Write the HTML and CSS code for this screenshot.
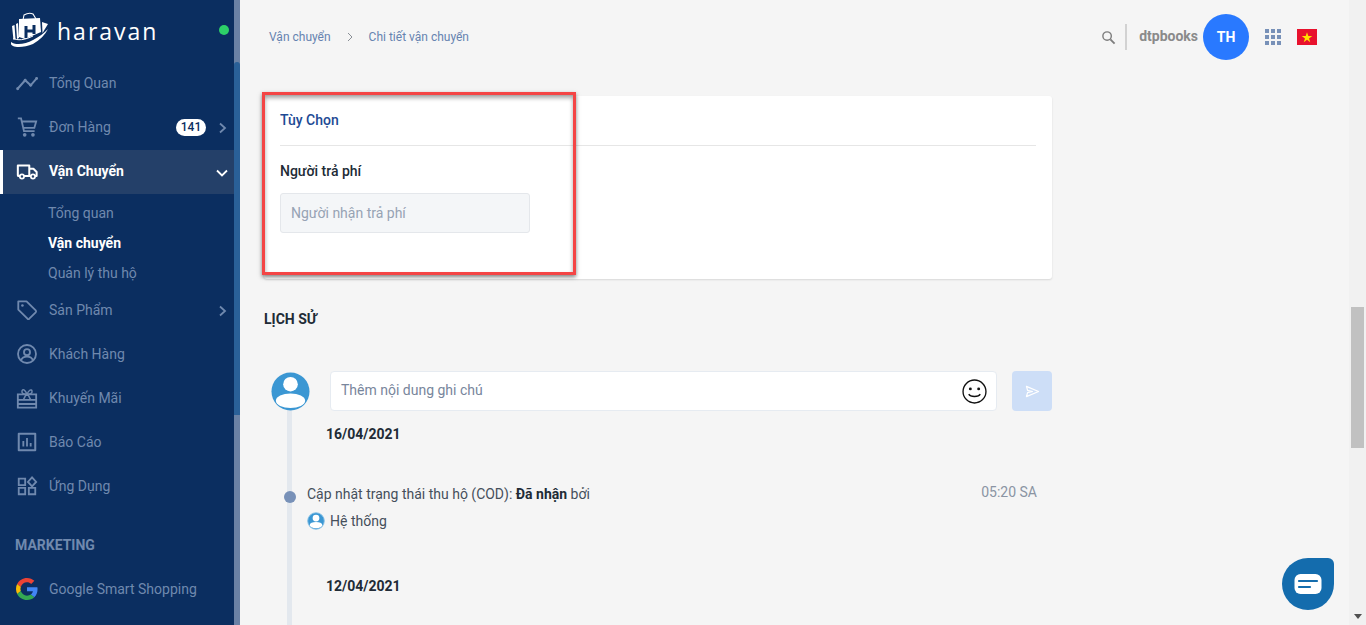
FILE: index.html
```html
<!DOCTYPE html>
<html lang="vi">
<head>
<meta charset="utf-8">
<title>Haravan - Chi tiết vận chuyển</title>
<link rel="stylesheet" href="styles.css">
</head>
<body>
<div class="app">
  <aside class="sidebar">
    <div class="side-main">
      <div class="brand">
        <svg class="brand-mark" viewBox="0 0 37 36" width="37" height="36" aria-hidden="true">
          <path d="M12 8l1-5q5-3 9-1l3 5" fill="none" stroke="#fff" stroke-width="1.100"/>
          <path d="M8 7l21-1 1 14-16 7-6-2z" fill="#fff"/>
          <path d="M1 14l2.500-1 1 14-2 1zM5 12l2-1 1 15-2 1z" fill="#fff"/>
          <path d="M31 10l6 2-5.500 9z" fill="#fff"/>
          <path d="M15 14v12M23 13v9M15 19h8" stroke="#0b2e60" stroke-width="3" fill="none"/>
          <path d="M0 30c3 3 14 3 22-2 6-3 11-7 15-11-3 6-8 11-15 15-7 3-16 4-20 2-2-1-3-3-2-4z" fill="#fff"/>
          <path d="M2 26c4 3 12 2 20-2" fill="none" stroke="#fff" stroke-width="1"/>
        </svg>
        <span class="brand-name">haravan</span>
        <span class="status-dot"></span>
      </div>
      <nav class="nav">
        <a class="nav-item"><svg class="ico" viewBox="0 0 24 24"><path d="M1.500 18.500l8.500-9.500 6 5.500 7-8" fill="none" stroke="currentColor" stroke-width="2.200"/><circle cx="1.800" cy="18.300" r="1.600" fill="currentColor"/><circle cx="10" cy="9" r="1.600" fill="currentColor"/><circle cx="16" cy="14.500" r="1.600" fill="currentColor"/><circle cx="22.500" cy="7" r="1.600" fill="currentColor"/></svg><span>Tổng Quan</span></a>
        <a class="nav-item"><svg class="ico" viewBox="0 0 24 24"><path d="M2 2.500h3.500l3.200 14h11.600M6 6h16l-2 7H7.800" fill="none" stroke="currentColor" stroke-width="2"/><circle cx="9.500" cy="20.500" r="2" fill="currentColor"/><circle cx="18.500" cy="20.500" r="2" fill="currentColor"/></svg><span>Đơn Hàng</span><b class="badge">141</b><svg class="chev" viewBox="0 0 12 12"><path d="M4 1.500l5 4.500-5 4.500" fill="none" stroke="currentColor" stroke-width="1.800"/></svg></a>
        <a class="nav-item active"><svg class="ico" viewBox="0 0 24 24"><path d="M2 6h12.500v11.500H3a1 1 0 01-1-1zM14.500 9.500h4.500l3.500 3.500v4.500h-8z" fill="none" stroke="currentColor" stroke-width="2.200" stroke-linejoin="round"/><circle cx="6.500" cy="18" r="2.300" fill="#244069" stroke="currentColor" stroke-width="1.900"/><circle cx="18.500" cy="18" r="2.300" fill="#244069" stroke="currentColor" stroke-width="1.900"/></svg><span>Vận Chuyển</span><svg class="chev" viewBox="0 0 12 12"><path d="M1 3.500l5 5 5-5" fill="none" stroke="currentColor" stroke-width="1.800"/></svg></a>
        <div class="sub">
          <a class="sub-item">Tổng quan</a>
          <a class="sub-item current">Vận chuyển</a>
          <a class="sub-item">Quản lý thu hộ</a>
        </div>
        <a class="nav-item"><svg class="ico" viewBox="0 0 24 24"><path d="M2.500 2.500h9l10 10a1.500 1.500 0 010 2l-7 7a1.500 1.500 0 01-2 0l-10-10z" fill="none" stroke="currentColor" stroke-width="2" stroke-linejoin="round"/><circle cx="7" cy="7" r="1.400" fill="currentColor"/></svg><span>Sản Phẩm</span><svg class="chev" viewBox="0 0 12 12"><path d="M4 1.500l5 4.500-5 4.500" fill="none" stroke="currentColor" stroke-width="1.800"/></svg></a>
        <a class="nav-item"><svg class="ico" viewBox="0 0 24 24"><circle cx="12" cy="12" r="9.800" fill="none" stroke="currentColor" stroke-width="2"/><circle cx="12" cy="10" r="3.300" fill="none" stroke="currentColor" stroke-width="2"/><path d="M5.500 19c1-3 3.500-4.200 6.500-4.200s5.500 1.200 6.500 4.200" fill="none" stroke="currentColor" stroke-width="2"/></svg><span>Khách Hàng</span></a>
        <a class="nav-item"><svg class="ico" viewBox="0 0 24 24"><path d="M2 8h20v14.500H2zM2 14h20M2 18.500h20" fill="none" stroke="currentColor" stroke-width="2"/><path d="M12 8C10 3 7 1.500 6.500 4.500S9 8 12 8c3 0 6-1 5.500-3.500S14 3 12 8zM8 14l3-6M16 14l-3-6" fill="none" stroke="currentColor" stroke-width="1.600"/></svg><span>Khuyến Mãi</span></a>
        <a class="nav-item"><svg class="ico" viewBox="0 0 24 24"><path d="M3 3h18v18H3z" fill="none" stroke="currentColor" stroke-width="2.200" stroke-linejoin="round"/><path d="M8 11v6M12 7.500V17M16 13v4" stroke="currentColor" stroke-width="2"/></svg><span>Báo Cáo</span></a>
        <a class="nav-item"><svg class="ico" viewBox="0 0 24 24"><path d="M3 4h7v7H3zM3 14h7v7H3zM14 14h7v7h-7z" fill="none" stroke="currentColor" stroke-width="2"/><path d="M17.500 2.500l4.500 5-4.500 5-4.500-5z" fill="none" stroke="currentColor" stroke-width="2"/></svg><span>Ứng Dụng</span></a>
        <div class="nav-label">MARKETING</div>
        <a class="nav-item"><svg class="ico" viewBox="0 0 48 48"><path fill="#EA4335" d="M24 9.500c3.500 0 6.700 1.200 9.200 3.600l6.900-6.900C35.900 2.400 30.500 0 24 0 14.600 0 6.500 5.400 2.600 13.200l8 6.200C12.400 13.700 17.700 9.500 24 9.500z"/><path fill="#4285F4" d="M47 24.500c0-1.600-.1-3.100-.4-4.500H24v9h12.900c-.6 3-2.200 5.500-4.800 7.200l7.700 6C44.400 38 47 31.800 47 24.500z"/><path fill="#FBBC05" d="M10.500 28.600c-.5-1.400-.8-3-.8-4.600s.3-3.200.8-4.600l-8-6.200C.9 16.500 0 20.100 0 24s.9 7.500 2.600 10.800z"/><path fill="#34A853" d="M24 48c6.500 0 11.900-2.100 15.900-5.800l-7.700-6c-2.200 1.500-4.900 2.300-8.200 2.300-6.300 0-11.600-4.200-13.500-9.900l-8 6.200C6.500 42.600 14.600 48 24 48z"/></svg><span>Google Smart Shopping</span></a>
      </nav>
    </div>
    <div class="side-track"><div class="side-thumb"></div></div>
  </aside>

  <main class="content">
    <header class="topbar">
      <div class="crumbs"><a>Vận chuyển</a><svg class="crumb-sep" viewBox="0 0 8 10"><path d="M2 1l4 4-4 4" fill="none" stroke="currentColor" stroke-width="1"/></svg><a>Chi tiết vận chuyển</a></div>
      <div class="tools">
        <svg class="search" viewBox="0 0 16 16"><circle cx="6.500" cy="6.500" r="4.500" fill="none" stroke="currentColor" stroke-width="1.500"/><path d="M10 10l4.500 4.500" stroke="currentColor" stroke-width="2"/></svg>
        <span class="vr"></span>
        <span class="user">dtpbooks</span>
        <span class="avatar">TH</span>
        <span class="apps"><i></i><i></i><i></i><i></i><i></i><i></i><i></i><i></i><i></i></span>
        <svg class="flag" viewBox="0 0 20 16"><rect width="20" height="16" fill="#e8112d"/><path d="M10 3.200l1.300 3.800h4l-3.300 2.400 1.300 3.800-3.300-2.400-3.300 2.400 1.300-3.800L4.700 7h4z" fill="#ffe000"/></svg>
      </div>
    </header>

    <div class="column">
      <section class="card">
        <h2 class="card-title">Tùy Chọn</h2>
        <label class="field-label">Người trả phí</label>
        <div class="readonly">Người nhận trả phí</div>
        <div class="highlight"></div>
      </section>

      <h3 class="history-title">LỊCH SỬ</h3>

      <div class="timeline">
        <div class="note-row">
          <svg class="note-avatar" viewBox="0 0 40 40"><circle cx="20" cy="20" r="19.500" fill="#3b97d3"/><g fill="#fff"><circle cx="20" cy="12.500" r="7.500"/><ellipse cx="20" cy="29.500" rx="15" ry="7.500"/></g></svg>
          <div class="note-input"><span class="note-ph">Thêm nội dung ghi chú</span>
            <svg class="smile" viewBox="0 0 24 24"><circle cx="12" cy="12" r="11" fill="none" stroke="#111" stroke-width="1.300"/><circle cx="8" cy="9.500" r="1.400" fill="#111"/><circle cx="16" cy="9.500" r="1.400" fill="#111"/><path d="M6.500 14.500c1.500 3 9.500 3 11 0" fill="none" stroke="#111" stroke-width="1.300"/></svg>
          </div>
          <button class="send"><svg viewBox="0 0 16 14" width="15" height="13"><path d="M1.500 1.500L14.500 7 1.500 12.500l1.200-4.200L8 7 2.700 5.700z" fill="none" stroke="#fff" stroke-width="1.300" stroke-linejoin="round"/></svg></button>
        </div>
        <div class="date first">16/04/2021</div>
        <div class="event">
          <span class="dot"></span>
          <div class="event-body">
            <p class="event-text">Cập nhật trạng thái thu hộ (COD): <b>Đã nhận</b> bởi</p>
            <p class="event-by"><svg class="mini" viewBox="0 0 40 40"><circle cx="20" cy="20" r="18.500" fill="#3b97d3" stroke="#8cc4e8" stroke-width="2"/><g fill="#fff"><circle cx="20" cy="13.500" r="7.500"/><ellipse cx="20" cy="29" rx="14" ry="7"/></g></svg>Hệ thống</p>
          </div>
          <span class="time">05:20 SA</span>
        </div>
        <div class="date">12/04/2021</div>
      </div>
    </div>

    <button class="chat"><svg viewBox="0 0 28 22" width="28" height="22"><rect width="27" height="20" x=".5" y="1" rx="6" fill="#fff"/><path d="M5 8h18M5 14h11" stroke="#146cad" stroke-width="2.200" stroke-linecap="round"/></svg></button>
  </main>

  <div class="page-scroll"><div class="page-thumb"></div><span class="page-arrow"></span></div>
</div>
</body>
</html>
```
FILE: styles.css
```css
* { box-sizing: border-box; }
html, body { margin: 0; height: 100%; overflow: hidden; }
body { font-family: Roboto, "Liberation Sans", sans-serif; font-size: 14px; color: #212b36; background: #f5f5f5; }
a { color: inherit; text-decoration: none; }
.app { display: flex; height: 625px; }

.sidebar { width: 240px; flex: none; display: flex; background: #0b2e60; color: #7089ae; }
.side-main { flex: 1; min-width: 0; }
.side-track { width: 6px; padding-top: 62px; background: #6a81a5; }
.side-thumb { height: 353px; background: #2a6098; border-radius: 3px 3px 0 0; }

.brand { height: 61px; display: flex; align-items: center; padding: 0 0 0 11px; position: relative; }
.brand-mark { flex: none; margin-top: -1px; }
.brand-name { font-family: "Open Sans", sans-serif; font-size: 23px; font-weight: 400; letter-spacing: 2px; color: #fff; margin: 1px 0 0 9px; }
.status-dot { position: absolute; left: 219px; top: 25px; width: 10px; height: 10px; border-radius: 50%; background: #2dd068; }

.nav-item { height: 44px; display: flex; align-items: center; padding-left: 16px; font-size: 14px; position: relative; }
.nav-item span { margin-left: 11px; }
.ico { width: 22px; height: 22px; flex: none; }
.chev { width: 12px; height: 12px; position: absolute; left: 216px; top: 17px; }
.badge { position: absolute; left: 176px; top: 14px; width: 30px; height: 17px; border-radius: 9px; background: #fff; color: #0b2e60; font-size: 12px; font-weight: 500; line-height: 17px; text-align: center; }
.active { background: #244069; color: #fff; font-weight: 700; margin-top: 1px; border-left: 3px solid #fff; padding: 0 0 2px 13px; }
.active .chev { left: 213px; }
.sub { padding: 4px 0 0; height: 94px; }
.sub-item { display: block; height: 30px; line-height: 30px; padding-left: 48px; font-size: 14px; }
.current { color: #fff; font-weight: 700; }
.nav-label { height: 59px; margin-top: 7px; padding: 21px 0 0 15px; font-size: 14px; line-height: 18px; font-weight: 700; color: #7089ae; }
.nav-label + .nav-item { margin-top: -7px; }

.content { flex: 1; min-width: 0; position: relative; overflow: hidden; }
.topbar { height: 72px; display: flex; align-items: center; justify-content: space-between; padding: 0 32px 0 29px; }
.crumbs { display: flex; align-items: center; font-size: 12px; color: #6683b0; margin-top: 1px; }
.crumb-sep { width: 8px; height: 10px; margin: 0 15px 0 15px; color: #8a8f96; }
.tools { display: flex; align-items: center; margin-top: 2px; }
.search { width: 15px; height: 15px; color: #7d7d7d; }
.vr { width: 2px; height: 26px; background: #d2d2d2; margin: 0 12px 0 9px; }
.user { font-weight: 700; font-size: 14px; color: #8a8a8a; margin-top: -2px; }
.avatar { width: 46px; height: 46px; border-radius: 50%; background: #2979ff; color: #fff; font-weight: 700; font-size: 14px; display: flex; align-items: center; justify-content: center; margin-left: 5px; }
.apps { display: grid; grid-template-columns: repeat(3, 4px); grid-auto-rows: 4px; gap: 2px; margin-left: 16px; }
.apps i { background: #7891b8; display: block; }
.flag { width: 20px; height: 16px; margin-left: 16px; }

.column { width: 788px; margin: 24px 0 0 24px; }
.card { height: 183px; background: #fff; border-radius: 3px; padding: 0 16px; position: relative; box-shadow: 0 1px 2px rgba(0,0,0,.12); }
.card-title { margin: 0; height: 50px; line-height: 48px; font-size: 14px; font-weight: 500; color: #1d4a94; border-bottom: 1px solid #e6e6e6; }
.field-label { display: block; margin-top: 15px; font-size: 14px; font-weight: 500; line-height: 20px; color: #212b36; }
.readonly { width: 250px; height: 40px; margin-top: 12px; background: #f4f6f8; border: 1px solid #e4e7eb; border-radius: 3px; padding: 0 10px; line-height: 38px; color: #97a3b4; }
.highlight { position: absolute; left: -2px; top: -4px; width: 314px; height: 183px; border: 3px solid #f44545; box-shadow: 0 2px 4px rgba(0,0,0,.5), inset 0 3px 4px rgba(0,0,0,.35); pointer-events: none; }
.history-title { margin: 31px 0 0; font-size: 14px; font-weight: 700; line-height: 18px; color: #212b36; }

.timeline { position: relative; margin-top: 43px; }
.timeline::before { content: ""; position: absolute; left: 23px; top: 38px; width: 5px; height: 300px; background: #e3e8ee; }
.note-row { display: flex; align-items: flex-start; height: 40px; position: relative; }
.note-avatar { width: 39px; height: 39px; margin: 1px 0 0 7px; flex: none; }
.note-input { width: 667px; height: 40px; margin-left: 20px; background: #fff; border: 1px solid #e6ebf1; border-radius: 4px; padding: 0 9px 0 10px; display: flex; align-items: center; justify-content: space-between; color: #78869c; }
.note-ph { margin-top: -2px; }
.smile { width: 25px; height: 25px; }
.send { width: 40px; height: 40px; margin-left: 15px; padding: 0; border: 0; border-radius: 4px; background: #cddef7; display: flex; align-items: center; justify-content: center; }
.date { padding-left: 62px; font-size: 14px; font-weight: 700; line-height: 18px; margin-top: 46px; color: #212b36; position: relative; }
.date.first { margin-top: 14px; }
.event { display: flex; position: relative; margin-top: 41px; padding-left: 43px; justify-content: space-between; }
.dot { position: absolute; left: 20px; top: 7px; width: 12px; height: 12px; border-radius: 50%; background: #7891b8; }
.event-text, .event-by { margin: 0; line-height: 20px; color: #454f5b; }
.event-text b { font-weight: 700; color: #212b36; }
.event-by { display: flex; align-items: center; margin-top: 7px; }
.mini { width: 18px; height: 18px; margin-right: 5px; }
.time { color: #8a94a3; margin: -1px 15px 0 0; line-height: 18px; }

.chat { position: absolute; left: 1042px; top: 558px; width: 52px; height: 52px; padding: 0; border: 0; border-radius: 50% 6px 50% 50%; background: #146cad; display: flex; align-items: center; justify-content: center; }
.page-scroll { width: 17px; flex: none; background: #f1f1f1; position: relative; padding: 307px 2px 0; }
.page-thumb { height: 141px; background: #c1c1c1; }
.page-arrow { position: absolute; left: 5px; bottom: 6px; border: 4px solid transparent; border-top: 5px solid #505050; border-bottom: 0; }
```
